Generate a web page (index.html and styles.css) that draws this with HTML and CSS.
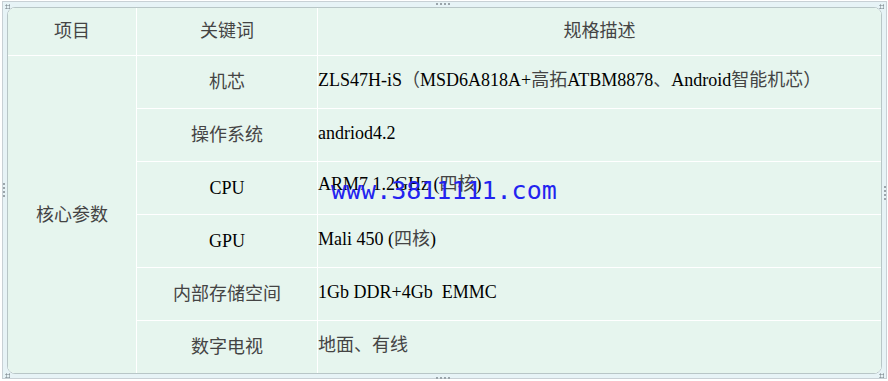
FILE: index.html
```html
<!DOCTYPE html>
<html lang="zh-CN">
<head>
<meta charset="utf-8">
<title>规格参数</title>
<link rel="stylesheet" href="styles.css">
</head>
<body>
<div class="frame">
  <span class="grip grip-tl"></span>
  <span class="grip grip-tr"></span>
  <span class="grip grip-bl"></span>
  <span class="grip grip-br"></span>
  <span class="grip-h grip-top"></span>
  <span class="grip-h grip-bottom"></span>
  <span class="grip-v grip-left"></span>
  <span class="grip-v grip-right"></span>
  <div class="box">
    <div class="spec">
      <div class="cell head zh">项目</div>
      <div class="cell head zh">关键词</div>
      <div class="cell head zh">规格描述</div>

      <div class="cell group zh">核心参数</div>

      <div class="cell key zh">机芯</div>
      <div class="cell val">ZLS47H-iS<span class="zh">（</span>MSD6A818A+<span class="zh">高拓</span>ATBM8878<span class="zh">、</span>Android<span class="zh">智能机芯）</span></div>

      <div class="cell key zh">操作系统</div>
      <div class="cell val">andriod4.2</div>

      <div class="cell key">CPU</div>
      <div class="cell val cpu">ARM7 1.2GHz (<span class="zh">四核</span>)<span class="watermark">www.3811111.com</span></div>

      <div class="cell key">GPU</div>
      <div class="cell val">Mali 450 (<span class="zh">四核</span>)</div>

      <div class="cell key zh">内部存储空间</div>
      <div class="cell val">1Gb DDR+4Gb&nbsp; EMMC</div>

      <div class="cell key zh">数字电视</div>
      <div class="cell val zh">地面、有线</div>
    </div>
  </div>
</div>
</body>
</html>
```

FILE: styles.css
```css
html, body {
  margin: 0;
  padding: 0;
  background: #ffffff;
}

body {
  font-family: "Liberation Serif", "Noto Sans CJK SC", serif;
  font-size: 18px;
  color: #000;
}

.frame {
  position: relative;
  box-sizing: border-box;
  width: 885px;
  height: 378px;
  margin: 1px 0 0 2px;
  border: 1px solid #c8d0d5;
  background: #e7f3f6;
  padding: 5px 4px 4px 4px;
}

.box {
  box-sizing: border-box;
  height: 367px;
  border: 1px solid #b8c6c7;
  border-radius: 8px;
  background: #e6f5ee;
  overflow: hidden;
}

.spec {
  display: grid;
  grid-template-columns: 128px 180px 563px;
  grid-template-rows: 47px repeat(6, 52px);
  gap: 1px;
  background: #ffffff;
}

.cell {
  background: #e6f5ee;
  display: flex;
  align-items: center;
  line-height: 22px;
  white-space: nowrap;
}

.zh {
  color: #444444;
}

.head,
.key,
.group {
  justify-content: center;
}

.head {
  padding-bottom: 1px;
}

.group {
  grid-column: 1;
  grid-row: 2 / span 6;
}

.key {
  grid-column: 2;
}

.val {
  grid-column: 3;
  padding-bottom: 4px;
  box-sizing: border-box;
}

.cpu {
  position: relative;
  padding-bottom: 8px;
}

.watermark {
  position: absolute;
  left: 13px;
  top: 15px;
  font-family: "DejaVu Sans Mono", monospace;
  font-size: 25px;
  line-height: 28px;
  color: #2323f0;
}

.grip,
.grip-h,
.grip-v {
  position: absolute;
  display: block;
}

.grip {
  width: 5px;
  height: 5px;
  background:
    radial-gradient(circle, #8f9aa0 0.9px, transparent 1.2px) 0 0 / 3px 3px;
}

.grip-tl { left: 2px; top: 2px; }
.grip-tr { right: 2px; top: 2px; }
.grip-bl { left: 2px; bottom: 0; }
.grip-br { right: 2px; bottom: 0; }

.grip-h {
  width: 14px;
  height: 2px;
  left: 433px;
  background: repeating-linear-gradient(90deg, #9aa4aa 0 2px, transparent 2px 4px);
}

.grip-top { top: 1px; }
.grip-bottom { bottom: -1px; }

.grip-v {
  width: 2px;
  height: 14px;
  background: repeating-linear-gradient(180deg, #9aa4aa 0 2px, transparent 2px 4px);
}

.grip-left { left: 0; top: 181px; }
.grip-right { right: 0; top: 184px; }
```
